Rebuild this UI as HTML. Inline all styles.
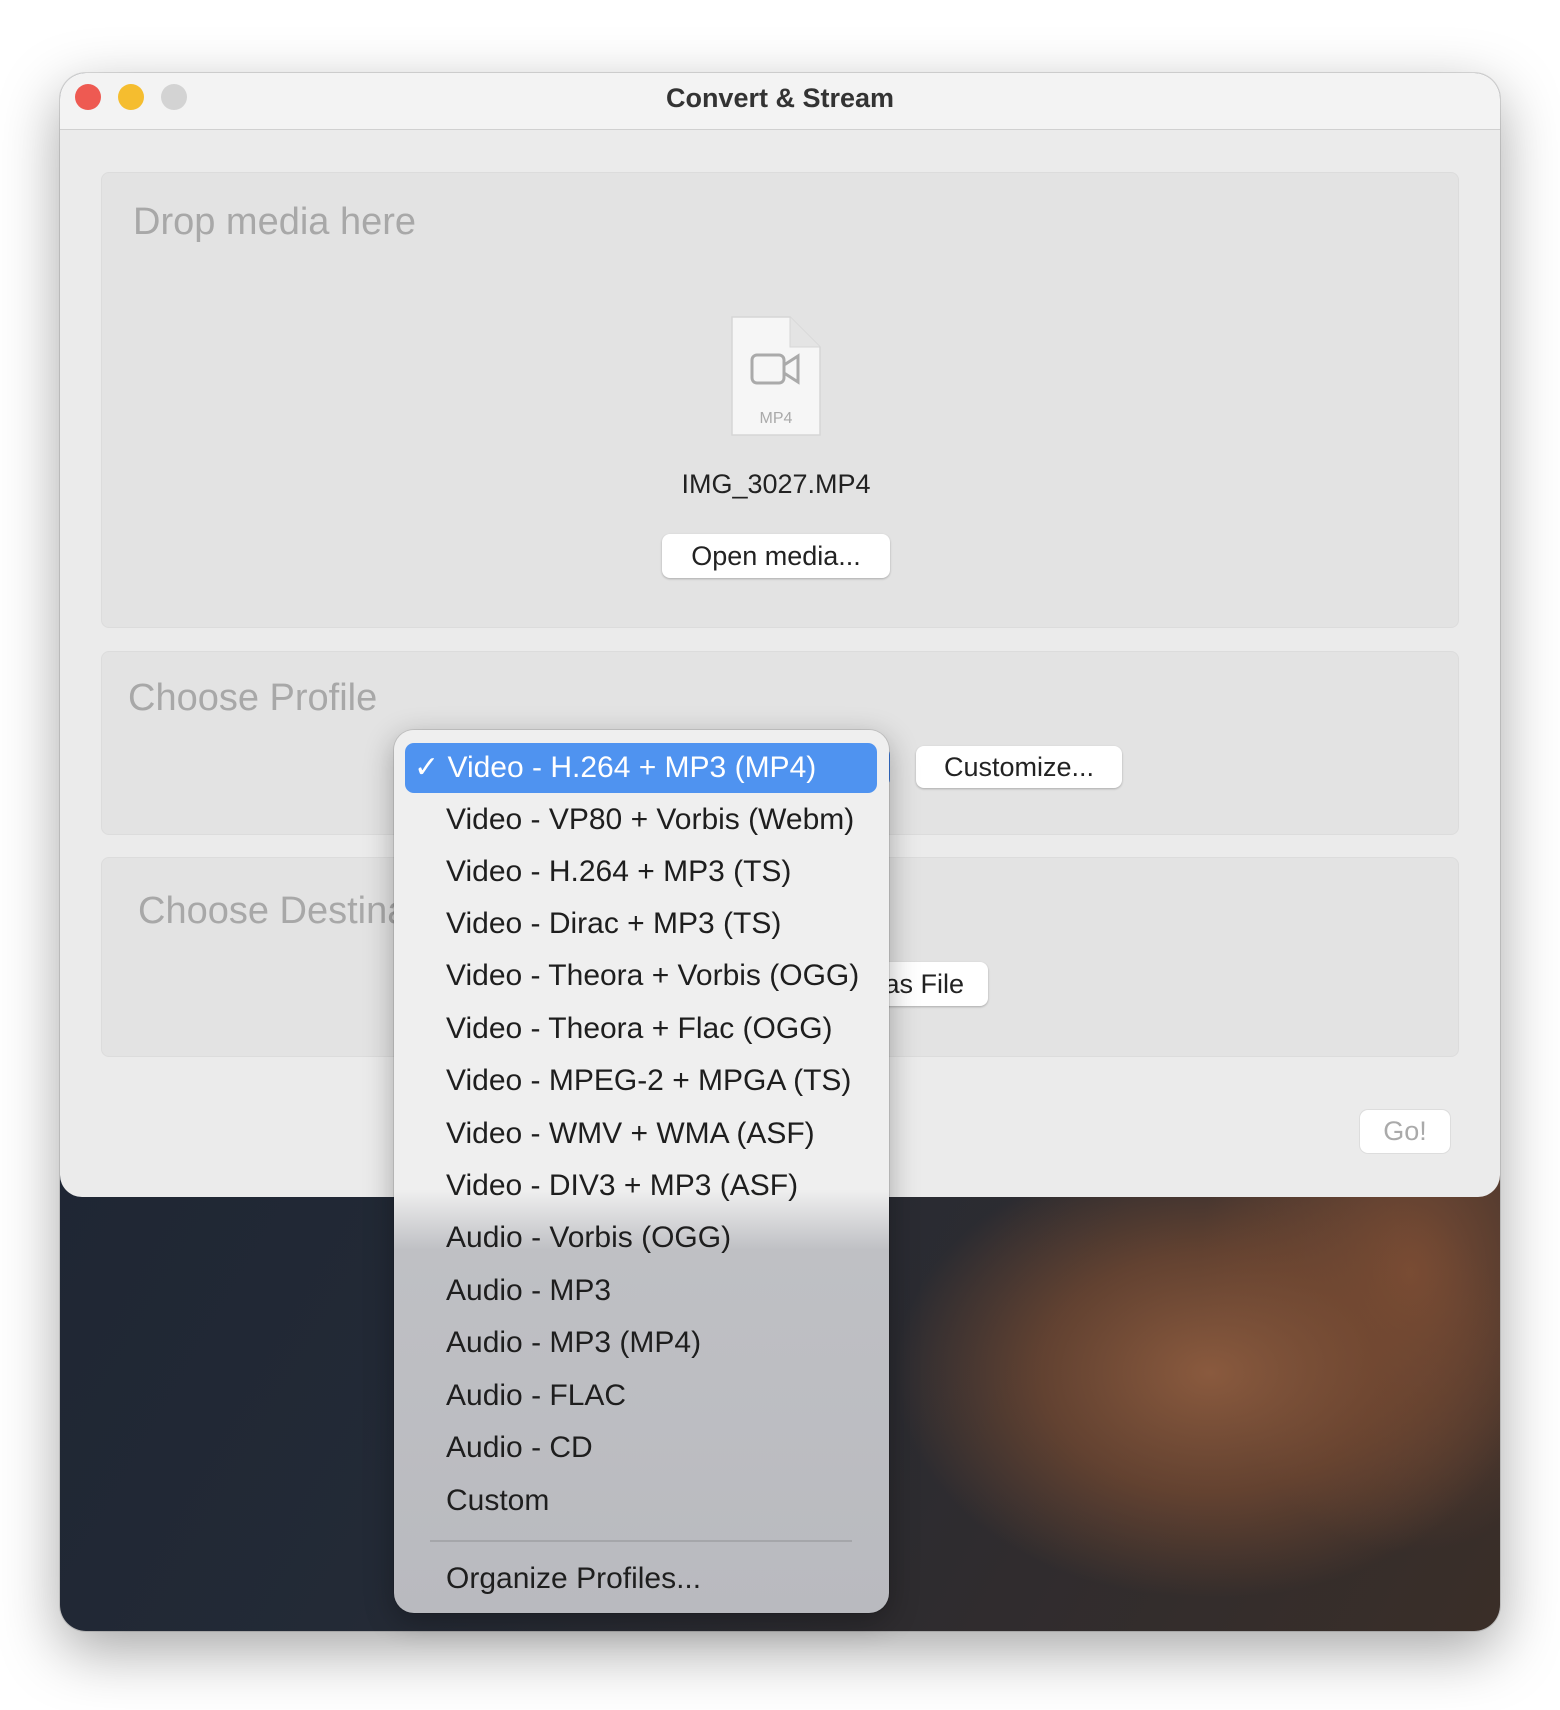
<!DOCTYPE html>
<html><head><meta charset="utf-8"><style>
*{margin:0;padding:0;box-sizing:border-box}
body{width:1560px;height:1710px;background:#fff;position:relative;overflow:hidden;font-family:"Liberation Sans",sans-serif}
.win{position:absolute;left:60px;top:73px;width:1440px;height:1558px;border-radius:26px;overflow:hidden;box-shadow:0 20px 60px rgba(0,0,0,.35),0 0 0 1px rgba(0,0,0,.12)}
.title{position:absolute;left:0;top:0;width:100%;height:57px;background:#f3f3f3;border-bottom:1px solid #d0d0d0;text-align:center;font-weight:bold;font-size:27px;line-height:50px;color:#333;z-index:2}
.dot{position:absolute;top:11px;width:26px;height:26px;border-radius:50%;z-index:3}
.content{position:absolute;left:0;top:56px;width:100%;height:1068px;background:#ebebeb;border-radius:0 0 22px 22px}
.bg{position:absolute;left:0;top:0;width:100%;height:100%;background:
radial-gradient(ellipse 420px 300px at 1150px 1300px,#8a5a3e 0%,rgba(120,75,50,.7) 40%,transparent 75%),
radial-gradient(ellipse 300px 400px at 1350px 1200px,#7a4c34 0%,transparent 70%),
linear-gradient(120deg,#1a2231 0%,#232a36 50%,#3a2e28 100%)}
.box{position:absolute;left:41px;width:1358px;background:#e3e3e3;border:1px solid #dcdcdc;border-radius:8px}
.lbl{position:absolute;color:#a8a8a8;font-size:38px}
.btn{position:absolute;background:#fff;border-radius:8px;box-shadow:0 1px 2px rgba(0,0,0,.25);font-size:27px;color:#222;text-align:center}
.menu{position:absolute;left:394px;top:730px;width:495px;height:883px;border-radius:20px;overflow:hidden;box-shadow:0 8px 30px rgba(0,0,0,.3),0 0 0 1px rgba(0,0,0,.1);background:linear-gradient(#efefef 0,#efefef 460px,#bfc0c4 520px,#b9babf 100%)}
.it{position:absolute;left:52px;font-size:30px;color:#1e1e1e;line-height:52px;white-space:nowrap}
.hl{position:absolute;left:11px;top:12px;width:472px;height:50px;background:#4f93f0;border-radius:9px}
</style></head><body>
<div class="win">
<div class="bg"></div>
<div class="content">
 <div class="box" style="top:43px;height:456px"></div>
 <div class="lbl" style="left:73px;top:72px">Drop media here</div>
 <svg style="position:absolute;left:668px;top:186px" width="96" height="126" viewBox="0 0 96 126">
  <path d="M4 2H62L92 32V120H4Z" fill="#f6f6f6" stroke="#d6d6d6" stroke-width="1.5"/>
  <path d="M62 2V32H92" fill="#e4e4e4" stroke="#d6d6d6"/>
  <rect x="24" y="40" width="32" height="28" rx="5" fill="none" stroke="#aaa" stroke-width="3"/>
  <path d="M56 50L70 41V67L56 58" fill="none" stroke="#aaa" stroke-width="3"/>
  <text x="48" y="108" font-size="16" fill="#aaa" text-anchor="middle" font-family="Liberation Sans">MP4</text>
 </svg>
 <div style="position:absolute;left:0;width:1432px;top:340px;text-align:center;font-size:27px;color:#222">IMG_3027.MP4</div>
 <div class="btn" style="left:602px;top:405px;width:228px;height:44px;line-height:44px">Open media...</div>
 <div class="box" style="top:522px;height:184px"></div>
 <div class="lbl" style="left:68px;top:548px">Choose Profile</div>
 <div class="btn" style="left:856px;top:617px;width:206px;height:42px;line-height:42px">Customize...</div>
 <div style="position:absolute;left:812px;top:619px;width:18px;height:38px;background:#3b7ee8;border-radius:0 7px 7px 0"></div>
 <div class="box" style="top:728px;height:200px"></div>
 <div class="lbl" style="left:78px;top:761px">Choose Destination</div>
 <div class="btn" style="left:760px;top:833px;width:168px;height:44px;line-height:44px;text-align:right;padding-right:24px">as File</div>
 <div class="btn" style="left:1300px;top:981px;width:90px;height:43px;line-height:43px;color:#aaa;box-shadow:0 0 0 1px #ddd">Go!</div>
</div>
<div class="title">Convert &amp; Stream</div>
<div class="dot" style="left:15px;background:#ee5a52"></div>
<div class="dot" style="left:58px;background:#f5bd2f"></div>
<div class="dot" style="left:101px;background:#d3d3d3"></div>
</div>
<div class="menu">
 <div class="hl" style="top:13px"></div>
 <div class="it" style="top:12px;left:20px;color:#fff">✓ Video - H.264 + MP3 (MP4)</div>
 <div class="it" style="top:64px">Video - VP80 + Vorbis (Webm)</div>
 <div class="it" style="top:116px">Video - H.264 + MP3 (TS)</div>
 <div class="it" style="top:168px">Video - Dirac + MP3 (TS)</div>
 <div class="it" style="top:220px">Video - Theora + Vorbis (OGG)</div>
 <div class="it" style="top:273px">Video - Theora + Flac (OGG)</div>
 <div class="it" style="top:325px">Video - MPEG-2 + MPGA (TS)</div>
 <div class="it" style="top:378px">Video - WMV + WMA (ASF)</div>
 <div class="it" style="top:430px">Video - DIV3 + MP3 (ASF)</div>
 <div class="it" style="top:482px">Audio - Vorbis (OGG)</div>
 <div class="it" style="top:535px">Audio - MP3</div>
 <div class="it" style="top:587px">Audio - MP3 (MP4)</div>
 <div class="it" style="top:640px">Audio - FLAC</div>
 <div class="it" style="top:692px">Audio - CD</div>
 <div class="it" style="top:745px">Custom</div>
 <div style="position:absolute;left:36px;top:810px;width:422px;height:2px;background:#a5a6aa"></div>
 <div class="it" style="top:823px">Organize Profiles...</div>
</div>
</body></html>
